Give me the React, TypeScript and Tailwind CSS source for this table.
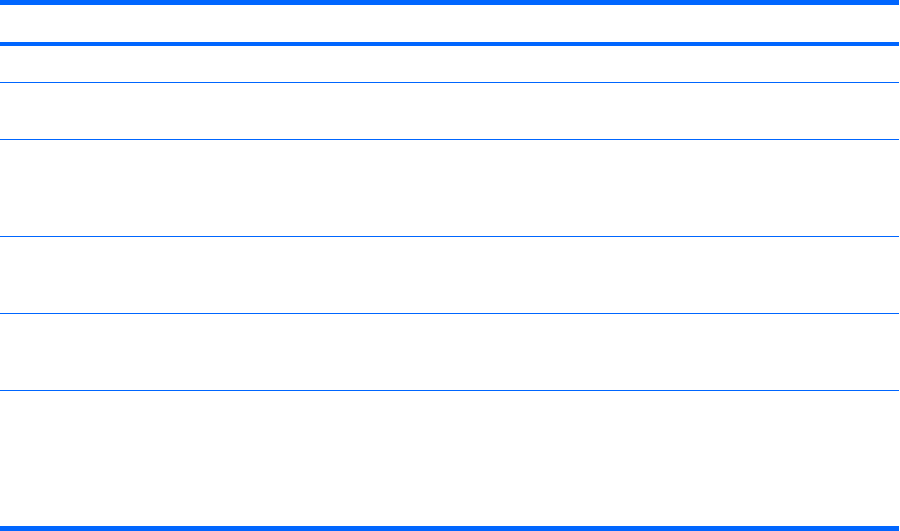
export default function App() {
  // empty ruled table: thick rules top/header/bottom, thin rules between rows
  const rows = [56, 96, 76, 76]

  return (
    <main className="min-h-screen bg-white" style={{ fontFamily: '"Liberation Sans", Arial, sans-serif' }}>
      <div className="w-[899px] border-t-[5px] border-b-[5px] border-[#0066ff]">
        <div className="h-[41px] border-b-4 border-[#0066ff]" />
        <div className="h-[37px] border-b border-[#0066ff]" />
        {rows.map((h, i) => (
          <div key={i} className="border-b border-[#0066ff]" style={{ height: h + 1 }} />
        ))}
        <div className="h-[135px]" />
      </div>
    </main>
  )
}
